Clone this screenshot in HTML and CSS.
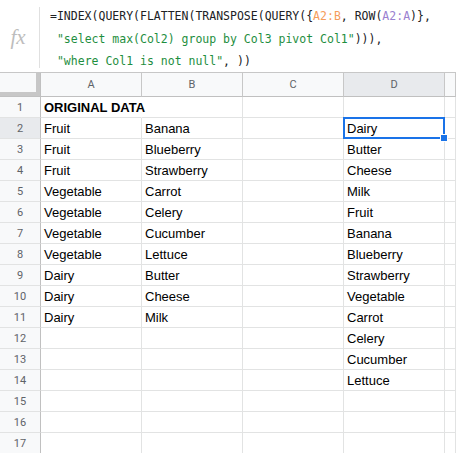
FILE: index.html
```html
<!DOCTYPE html>
<html lang="en">
<head>
    <meta charset="UTF-8">
    <title>Sheet</title>
    <link rel="stylesheet" href="styles.css">
</head>
<body>
    <!-- Barra de fórmulas -->
    <div class="formula-bar">
        <div class="fx">fx</div>
        <div class="formula">=INDEX(QUERY(FLATTEN(TRANSPOSE(QUERY({<span class="r1">A2:B</span>, ROW(<span class="r2">A2:A</span>)},
 <span class="str">"select max(Col2) group by Col3 pivot Col1"</span>))),
 <span class="str">"where Col1 is not null"</span>, ))</div>
    </div>

    <!-- Cuadrícula -->
    <div class="sheet">
        <div class="corner"></div><div class="ch">A</div><div class="ch">B</div><div class="ch">C</div><div class="ch on">D</div><div class="ch"></div>

        <div class="rh">1</div><div class="c bold over">ORIGINAL DATA</div><div class="c"></div><div class="c"></div><div class="c"></div><div class="c"></div>
        <div class="rh on">2</div><div class="c">Fruit</div><div class="c">Banana</div><div class="c"></div><div class="c sel">Dairy<span class="handle"></span></div><div class="c"></div>
        <div class="rh">3</div><div class="c">Fruit</div><div class="c">Blueberry</div><div class="c"></div><div class="c">Butter</div><div class="c"></div>
        <div class="rh">4</div><div class="c">Fruit</div><div class="c">Strawberry</div><div class="c"></div><div class="c">Cheese</div><div class="c"></div>
        <div class="rh">5</div><div class="c">Vegetable</div><div class="c">Carrot</div><div class="c"></div><div class="c">Milk</div><div class="c"></div>
        <div class="rh">6</div><div class="c">Vegetable</div><div class="c">Celery</div><div class="c"></div><div class="c">Fruit</div><div class="c"></div>
        <div class="rh">7</div><div class="c">Vegetable</div><div class="c">Cucumber</div><div class="c"></div><div class="c">Banana</div><div class="c"></div>
        <div class="rh">8</div><div class="c">Vegetable</div><div class="c">Lettuce</div><div class="c"></div><div class="c">Blueberry</div><div class="c"></div>
        <div class="rh">9</div><div class="c">Dairy</div><div class="c">Butter</div><div class="c"></div><div class="c">Strawberry</div><div class="c"></div>
        <div class="rh">10</div><div class="c">Dairy</div><div class="c">Cheese</div><div class="c"></div><div class="c">Vegetable</div><div class="c"></div>
        <div class="rh">11</div><div class="c">Dairy</div><div class="c">Milk</div><div class="c"></div><div class="c">Carrot</div><div class="c"></div>
        <div class="rh">12</div><div class="c"></div><div class="c"></div><div class="c"></div><div class="c">Celery</div><div class="c"></div>
        <div class="rh">13</div><div class="c"></div><div class="c"></div><div class="c"></div><div class="c">Cucumber</div><div class="c"></div>
        <div class="rh">14</div><div class="c"></div><div class="c"></div><div class="c"></div><div class="c">Lettuce</div><div class="c"></div>
        <div class="rh">15</div><div class="c"></div><div class="c"></div><div class="c"></div><div class="c"></div><div class="c"></div>
        <div class="rh">16</div><div class="c"></div><div class="c"></div><div class="c"></div><div class="c"></div><div class="c"></div>
        <div class="rh">17</div><div class="c"></div><div class="c"></div><div class="c"></div><div class="c"></div><div class="c"></div>
    </div>
</body>
</html>
```

FILE: styles.css
```css
body, html {
    margin: 0;
    padding: 0;
    background: #fff;
    font-family: 'Liberation Sans', Arial, sans-serif;
}
.formula-bar {
    display: flex;
    height: 72px;
    border-bottom: 1px solid #c7c7c7;
}
.fx {
    width: 40px;
    flex: none;
    margin: 7px 0 4px;
    border-right: 1px solid #e0e0e0;
    box-sizing: border-box;
    display: flex;
    align-items: center;
    justify-content: center;
    padding-right: 3px;
    font-family: 'Liberation Serif', serif;
    font-style: italic;
    font-size: 21px;
    color: #bdbdbd;
}
.formula {
    padding: 5px 0 0 10px;
    font-family: 'DejaVu Sans Mono', monospace;
    font-size: 11.5px;
    line-height: 22.5px;
    white-space: pre;
    color: #202124;
}
.r1 { color: #f59c5a; }
.r2 { color: #9a80d0; }
.str { color: #1e8e3e; }

.sheet {
    display: grid;
    grid-template-columns: 41px 101px 101px 101px 101px 1fr;
    grid-template-rows: 24px;
    grid-auto-rows: 21px;
}
.sheet > div {
    box-sizing: border-box;
}
.corner {
    background: #f8f9fa;
    border-right: 1px solid #c0c0c0;
    border-bottom: 1px solid #c0c0c0;
    box-shadow: inset -4px -4px 0 #c7c7c7;
}
.ch {
    background: #f8f9fa;
    border-right: 1px solid #c7c7c7;
    border-bottom: 1px solid #c0c0c0;
    font-family: Roboto, sans-serif;
    font-size: 11px;
    color: #5f6368;
    display: flex;
    align-items: center;
    justify-content: center;
}
.rh {
    background: #f8f9fa;
    border-right: 1px solid #c0c0c0;
    border-bottom: 1px solid #e2e3e3;
    font-family: Roboto, sans-serif;
    font-size: 11px;
    color: #5f6368;
    display: flex;
    align-items: center;
    justify-content: center;
}
.on {
    background: #e8eaed;
}
.c {
    border-right: 1px solid #e2e3e3;
    border-bottom: 1px solid #e2e3e3;
    padding: 0 3px;
    font-size: 13px;
    line-height: 21px;
    color: #000;
    white-space: nowrap;
    position: relative;
}
.bold {
    font-weight: bold;
}
.over {
    border-right-color: transparent;
    overflow: visible;
    z-index: 1;
}
.sel::after {
    content: "";
    position: absolute;
    top: -1px;
    left: -1px;
    width: 102px;
    height: 22px;
    border: 2px solid #1a73e8;
    box-sizing: border-box;
}
.handle {
    position: absolute;
    right: -4px;
    bottom: -4px;
    width: 6px;
    height: 6px;
    background: #1a73e8;
    border: 1px solid #fff;
    z-index: 2;
}
```
